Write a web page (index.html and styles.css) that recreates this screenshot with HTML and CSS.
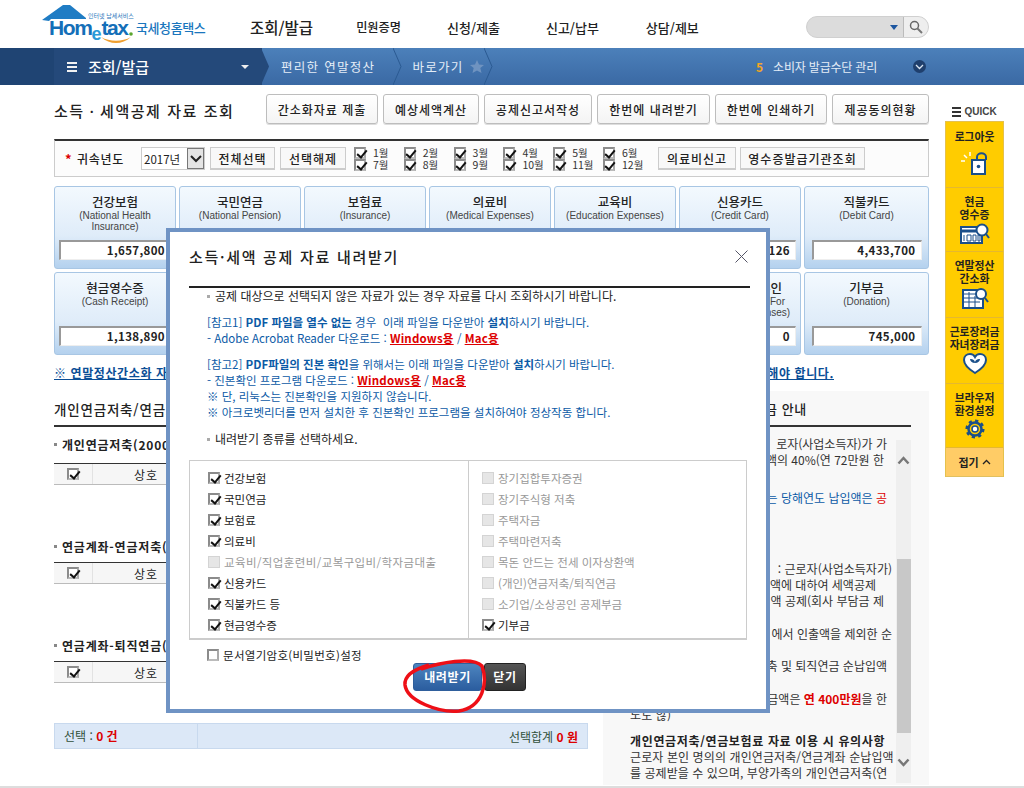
FILE: index.html
```html
<!DOCTYPE html>
<html lang="ko">
<head>
<meta charset="utf-8">
<title>국세청 홈택스</title>
<link rel="stylesheet" href="styles.css">
</head>
<body>
<div class="page">
  <header class="top">
    <div class="logo">
      <svg class="logo-art" width="100" height="46" viewBox="0 0 100 46"><path d="M0 20 21 5 28 5 44 18 44 19 9 19 7 21Z" fill="#1f7cc4"/><path d="M59 37C68 45 80 45 89 37 80 42 68 42 59 37Z" fill="#f0a030"/><circle cx="89" cy="34" r="1.800" fill="#5aa52d"/></svg>
      <span class="logo-small">인터넷 납세서비스</span>
      <span class="logo-word">Hom<span class="logo-e">e</span>tax</span>
      <span class="logo-kr">국세청홈택스</span>
    </div>
    <nav class="gnb">
      <a class="gnb-a gnb-main">조회/발급</a>
      <a class="gnb-a gnb-2">민원증명</a>
      <a class="gnb-a gnb-3">신청/제출</a>
      <a class="gnb-a gnb-4">신고/납부</a>
      <a class="gnb-a">상담/제보</a>
    </nav>
    <div class="search">
      <div class="search-field"><span class="caret-blue"></span></div>
      <div class="search-btn"><svg width="14" height="14" viewBox="0 0 14 14"><circle cx="5.500" cy="5.500" r="4" fill="none" stroke="#666" stroke-width="1.500"/><path d="M8.500 8.500 13 13" stroke="#777" stroke-width="2"/></svg></div>
    </div>
  </header>

  <div class="bar">
    <div class="bar-menu">
      <span class="burger"><i></i><i></i><i></i></span>
      <span class="bar-title">조회/발급</span>
      <span class="caret-white"></span>
      <svg class="chev-first" width="9" height="37" viewBox="0 0 9 37"><path d="M0 0 8 18.500 0 37Z" fill="#24497a"/></svg>
    </div>
    <span class="crumb crumb-1">편리한 연말정산</span>
    <svg class="chev" width="9" height="37" viewBox="0 0 9 37"><path d="M0 0 8 18.500 0 37" fill="none" stroke="#2b5a92"/></svg>
    <span class="crumb crumb-2">바로가기</span>
    <svg class="star" width="14" height="13" viewBox="0 0 14 13"><path d="M7 0 9 4.500 14 5 10.300 8 11.500 13 7 10.400 2.500 13 3.700 8 0 5 5 4.500Z" fill="#6f93c0"/></svg>
    <svg class="chev" width="9" height="37" viewBox="0 0 9 37"><path d="M0 0 8 18.500 0 37" fill="none" stroke="#2b5a92"/></svg>
    <div class="bar-right">
      <span class="num">5</span><span class="crumb crumb-r">소비자 발급수단 관리</span>
      <span class="round"><svg width="9" height="6" viewBox="0 0 9 6"><path d="M1 1 4.500 4.500 8 1" fill="none" stroke="#dbe6f2" stroke-width="1.300"/></svg></span>
    </div>
  </div>

  <div class="content">
    <main class="main">
      <div class="title-row">
        <h1 class="page-title">소득ㆍ세액공제 자료 조회</h1>
        <div class="tools">
          <button class="tool w112">간소화자료 제출</button>
          <button class="tool w96">예상세액계산</button>
          <button class="tool w108">공제신고서작성</button>
          <button class="tool w113">한번에 내려받기</button>
          <button class="tool w112">한번에 인쇄하기</button>
          <button class="tool w97">제공동의현황</button>
        </div>
      </div>

      <div class="filter">
        <span class="req">*</span><b class="filter-label">귀속년도</b>
        <div class="select"><span>2017년</span><span class="select-btn"><svg width="12" height="8" viewBox="0 0 12 8"><path d="M1 1 6 6 11 1" fill="none" stroke="#222" stroke-width="2"/></svg></span></div>
        <button class="mini w65">전체선택</button>
        <button class="mini w66">선택해제</button>
        <div class="months">
          <label class="month"><span class="cb on"></span>1월</label>
          <label class="month"><span class="cb on"></span>2월</label>
          <label class="month"><span class="cb on"></span>3월</label>
          <label class="month"><span class="cb on"></span>4월</label>
          <label class="month"><span class="cb on"></span>5월</label>
          <label class="month"><span class="cb on"></span>6월</label>
          <label class="month"><span class="cb on"></span>7월</label>
          <label class="month"><span class="cb on"></span>8월</label>
          <label class="month"><span class="cb on"></span>9월</label>
          <label class="month"><span class="cb on"></span>10월</label>
          <label class="month"><span class="cb on"></span>11월</label>
          <label class="month"><span class="cb on"></span>12월</label>
        </div>
        <button class="mini w78">의료비신고</button>
        <button class="mini w125">영수증발급기관조회</button>
      </div>

      <div class="cards">
        <div class="card"><b>건강보험</b><small>(National Health<br>Insurance)</small><div class="val">1,657,800</div></div>
        <div class="card"><b>국민연금</b><small>(National Pension)</small><div class="val"></div></div>
        <div class="card"><b>보험료</b><small>(Insurance)</small><div class="val"></div></div>
        <div class="card"><b>의료비</b><small>(Medical Expenses)</small><div class="val"></div></div>
        <div class="card"><b>교육비</b><small>(Education Expenses)</small><div class="val"></div></div>
        <div class="card"><b>신용카드</b><small>(Credit Card)</small><div class="val">126</div></div>
        <div class="card"><b>직불카드</b><small>(Debit Card)</small><div class="val wide">4,433,700</div></div>
        <div class="card"><b>현금영수증</b><small>(Cash Receipt)</small><div class="val">1,138,890</div></div>
        <div class="card"><div class="val"></div></div>
        <div class="card"><div class="val"></div></div>
        <div class="card"><div class="val"></div></div>
        <div class="card"><div class="val"></div></div>
        <div class="card"><b>주택차입금 본인</b><small>(Deduction Rent For<br>(Long Term Expenses)</small><div class="val">0</div></div>
        <div class="card"><b>기부금</b><small>(Donation)</small><div class="val wide">745,000</div></div>
      </div>

      <div class="notice"><a>※ 연말정산간소화 자료</a><a>해야 합니다.</a></div>

      <div class="lower">
        <section class="left">
          <h2 class="sec-title">개인연금저축/연금보험료</h2>
          <h3 class="sub first">개인연금저축(2000년 이전)</h3>
          <div class="thead"><span class="th-cb"><span class="cb on"></span></span><span class="th-name">상호</span></div>
          <h3 class="sub">연금계좌-연금저축(2001년)</h3>
          <div class="thead"><span class="th-cb"><span class="cb on"></span></span><span class="th-name">상호</span></div>
          <h3 class="sub">연금계좌-퇴직연금(확정)</h3>
          <div class="thead"><span class="th-cb"><span class="cb on"></span></span><span class="th-name">상호</span></div>
          <div class="sum">
            <div class="sum-a">선택 : <b>0 건</b></div>
            <div class="sum-b">선택합계 <b>0 원</b></div>
          </div>
        </section>

        <aside class="guide">
          <h2 class="guide-title">금 안내</h2>
          <div class="guide-body">
            <div class="guide-text">
              <p class="gl e9">로자(사업소득자)가 가</p>
              <p class="gl e12">액의 40%(연 72만원 한</p>
              <p class="gl e9 g22 blue">에는 당해연도 납입액은 <em>공</em></p>
              <p class="gl e4 g55">: 근로자(사업소득자가)</p>
              <p class="gl e20">액에 대하여 세액공제</p>
              <p class="gl e12">액 공제(회사 부담금 제</p>
              <p class="gl e4 g17">에서 인출액을 제외한 순</p>
              <p class="gl e9 g16">축 및 퇴직연금 순납입액</p>
              <p class="gl e9 g17">금액은 <em class="strong">연 400만원</em>을 한</p>
              <p class="gl out">노도 않)</p>
              <p class="gl head g10">개인연금저축/연금보험료 자료 이용 시 유의사항</p>
              <p class="gl out">근로자 본인 명의의 개인연금저축/연금계좌 순납입액</p>
              <p class="gl out tight">를 공제받을 수 있으며, 부양가족의 개인연금저축(연</p>
            </div>
            <div class="track">
              <svg class="arrow up" width="13" height="9" viewBox="0 0 13 9"><path d="M1.500 7.500 6.500 2 11.500 7.500" fill="none" stroke="#777" stroke-width="2.500"/></svg>
              <div class="thumb"></div>
              <svg class="arrow down" width="13" height="9" viewBox="0 0 13 9"><path d="M1.500 1.500 6.500 7 11.500 1.500" fill="none" stroke="#777" stroke-width="2.500"/></svg>
            </div>
          </div>
        </aside>
      </div>
    </main>

    <div class="quick">
      <div class="quick-title"><span class="burger dark"><i></i><i></i><i></i></span>QUICK</div>
      <div class="quick-box">
        <a class="q h66 one">로그아웃
          <svg width="30" height="24" viewBox="0 0 30 24"><path d="M12 8H25V22H12Z" fill="#fff" stroke="#1a4f8a" stroke-width="2"/><path d="M17 8V5C17 0 26 0 26 5V8" fill="none" stroke="#1a4f8a" stroke-width="2"/><circle cx="18.500" cy="14.500" r="1.800" fill="#1a4f8a"/><path d="M1 9H5M4 3 7 6M10 0V4" stroke="#fff" stroke-width="1.500"/></svg>
        </a>
        <a class="q h64">현금<br>영수증
          <svg width="30" height="22" viewBox="0 0 30 22"><path d="M1 4H22V20H1Z" fill="#fff" stroke="#1a4f8a" stroke-width="2"/><path d="M1 8H20" stroke="#1a4f8a" stroke-width="3"/><circle cx="22" cy="7" r="5.500" fill="#fff" stroke="#1a4f8a" stroke-width="2"/><path d="M26 11 29 15" stroke="#1a4f8a" stroke-width="2"/><path d="M4 12V18M7 12H11V18H7ZM13 12H16V18H13ZM18 12H20V18H18Z" fill="none" stroke="#1a4f8a"/></svg>
        </a>
        <a class="q h66">연말정산<br>간소화
          <svg width="30" height="22" viewBox="0 0 30 22"><path d="M3 3H23V21H3Z" fill="#fff" stroke="#1a4f8a" stroke-width="2"/><path d="M3 7H20M3 11H20M3 15H20M9 5V21M15 9V21" stroke="#1a4f8a"/><circle cx="21" cy="7" r="5" fill="#fff" stroke="#1a4f8a" stroke-width="2"/><path d="M25 11 28 15" stroke="#1a4f8a" stroke-width="2"/></svg>
        </a>
        <a class="q h66">근로장려금<br>자녀장려금
          <svg width="24" height="22" viewBox="0 0 24 22"><path d="M12 20C4 15 1 11 1 7 1 3 4 1 7 1 9 1 11 2 12 4 13 2 15 1 17 1 20 1 23 3 23 7 23 11 20 15 12 20Z" fill="#fff" stroke="#1a4f8a" stroke-width="2"/><path d="M12 14V9M12 10C9 10 7 8 7 6 10 6 12 7 12 10 12 7 14 6 17 6 17 8 15 10 12 10Z" fill="#1a4f8a"/></svg>
        </a>
        <a class="q h64">브라우저<br>환경설정
          <svg width="20" height="20" viewBox="0 0 20 20"><circle cx="10" cy="10" r="6.500" fill="none" stroke="#1a4f8a" stroke-width="2.500"/><circle cx="10" cy="10" r="7.800" fill="none" stroke="#1a4f8a" stroke-width="3.500" stroke-dasharray="3 3.100"/><circle cx="10" cy="10" r="3" fill="#fff" stroke="#1a4f8a" stroke-width="1.500"/></svg>
        </a>
        <a class="q-fold">접기<svg width="9" height="6" viewBox="0 0 9 6"><path d="M1 5 4.500 1.500 8 5" fill="none" stroke="#222" stroke-width="1.300"/></svg></a>
      </div>
    </div>
  </div>

  <div class="modal">
    <div class="modal-head">
      <h2 class="modal-title">소득·세액 공제 자료 내려받기</h2>
      <svg width="13" height="13" viewBox="0 0 13 13"><path d="M.5.500 12.500 12.500M12.500.500 .5 12.500" stroke="#556" fill="none"/></svg>
    </div>
    <p class="m-line bullet">공제 대상으로 선택되지 않은 자료가 있는 경우 자료를 다시 조회하시기 바랍니다.</p>
    <div class="m-note n1">
      <p>[참고1] <b>PDF 파일을 열수 없는</b> 경우&nbsp; 이래 파일을 다운받아 <b>설치</b>하시기 바랍니다.</p>
      <p>- Adobe Acrobat Reader 다운로드 : <a>Windows용</a> / <a>Mac용</a></p>
    </div>
    <div class="m-note n2">
      <p>[참고2] <b>PDF파일의 진본 확인</b>을 위해서는 이래 파일을 다운받아 <b>설치</b>하시기 바랍니다.</p>
      <p>- 진본확인 프로그램 다운로드 : <a>Windows용</a> / <a>Mac용</a></p>
      <p>※ 단, 리눅스는 진본확인을 지원하지 않습니다.</p>
      <p>※ 아크로벳리더를 먼저 설치한 후 진본확인 프로그램을 설치하여야 정상작동 합니다.</p>
    </div>
    <p class="m-line bullet m-choose">내려받기 종류를 선택하세요.</p>
    <div class="choices">
      <div class="col">
        <label class="ch"><span class="cb on"></span>건강보험</label>
        <label class="ch"><span class="cb on"></span>국민연금</label>
        <label class="ch"><span class="cb on"></span>보험료</label>
        <label class="ch"><span class="cb on"></span>의료비</label>
        <label class="ch off slash"><span class="cb dis"></span>교육비/직업훈련비/교복구입비/학자금대출</label>
        <label class="ch"><span class="cb on"></span>신용카드</label>
        <label class="ch"><span class="cb on"></span>직불카드 등</label>
        <label class="ch"><span class="cb on"></span>현금영수증</label>
      </div>
      <div class="col">
        <label class="ch off"><span class="cb dis"></span>장기집합투자증권</label>
        <label class="ch off"><span class="cb dis"></span>장기주식형 저축</label>
        <label class="ch off"><span class="cb dis"></span>주택자금</label>
        <label class="ch off"><span class="cb dis"></span>주택마련저축</label>
        <label class="ch off"><span class="cb dis"></span>목돈 안드는 전세 이자상환액</label>
        <label class="ch off"><span class="cb dis"></span>(개인)연금저축/퇴직연금</label>
        <label class="ch off"><span class="cb dis"></span>소기업/소상공인 공제부금</label>
        <label class="ch"><span class="cb on"></span>기부금</label>
      </div>
    </div>
    <label class="ch pw"><span class="cb"></span>문서열기암호(비밀번호)설정</label>
    <div class="m-btns">
      <button class="btn-blue">내려받기</button>
      <button class="btn-dark">닫기</button>
    </div>
    <svg class="scribble" width="90" height="60" viewBox="0 0 90 60"><path d="M20 12C38 6 72 -1 81 9 87 26 82 50 58 54 38 56 6 44 4 28 3 18 14 12 28 8" fill="none" stroke="#ee0f16" stroke-width="3.500"/></svg>
  </div>
</div>
</body>
</html>
```
FILE: styles.css
```css
*{box-sizing:border-box}
html,body{margin:0;padding:0;background:#fff}
body{font-family:"Noto Sans CJK KR","Liberation Sans",sans-serif;font-size:12px;color:#222}
h1,h2,h3,p{margin:0}
button{font-family:inherit;cursor:default}
.page{position:relative;width:1024px;height:788px;overflow:hidden;border-bottom:2px solid #ddd}

/* header */
.top{height:48px;display:flex;align-items:flex-start}
.logo{position:relative;width:208px;height:48px;margin-left:42px}
.logo-art{position:absolute;left:0;top:0}
.logo-small{position:absolute;left:46px;top:12px;font-size:6px;line-height:7px;color:#2b78bb;white-space:nowrap}
.logo-word{position:absolute;left:7px;top:16px;font:bold 21px/24px "Liberation Sans",sans-serif;letter-spacing:-1.400px;color:#146fb8;white-space:nowrap}
.logo-e{font-size:18px;color:#2b9ad8;position:relative;top:5px;letter-spacing:0}
.logo-kr{position:absolute;left:94px;top:20px;font-size:13px;line-height:16px;font-weight:500;color:#1a76bd;white-space:nowrap;letter-spacing:-.4px}
.gnb{display:flex;width:556px;height:48px;align-items:center;margin-top:3px}
.gnb-a{font-size:13px;font-weight:500;color:#222;white-space:nowrap}
.gnb-main{font-size:15.500px;margin-right:43px}
.gnb-2{font-size:12.200px;margin-right:46px}
.gnb-3{margin-right:46px}
.gnb-4{margin-right:47px}
.search{display:flex;width:123px;height:22px;margin-top:16px;border-radius:11px;overflow:hidden;background:#dcdcdc;border:1px solid #d0d0d0}
.search-field{flex:1;display:flex;align-items:center;justify-content:flex-end;padding-right:5px;border-right:1px solid #bbb}
.caret-blue{border:4px solid transparent;border-top:5px solid #1c56a0;border-bottom:0}
.search-btn{width:24px;background:#eee;display:flex;align-items:center;justify-content:center}

/* bar */
.bar{height:37px;display:flex;align-items:center;background:linear-gradient(#4c80ba,#3a69a4);color:#e8eff8}
.bar-menu{position:relative;width:262px;height:37px;background:#24497a;padding-left:67px;display:flex;align-items:center;box-shadow:inset 54px 0 0 #1f4473}
.burger{display:inline-flex;flex-direction:column;gap:2px;width:10px;margin-right:11px}
.burger i{display:block;height:2px;background:#f2f2f2}
.burger.dark{margin-right:3px;width:9px}
.burger.dark i{background:#333}
.bar-title{font-size:15px;color:#fff;font-weight:500}
.caret-white{border:4px solid transparent;border-top:4px solid #eee;border-bottom:0;margin-left:92px}
.chev-first{position:absolute;right:-8px;top:0}
.crumb{font-size:12.500px;letter-spacing:1.300px;color:#e4edf7;white-space:nowrap}
.crumb-1{margin-left:19px}
.bar .chev{margin-left:18px}
.crumb-2{margin-left:10px}
.crumb-r{font-size:12px;letter-spacing:-.2px}
.star{margin-left:6px}
.bar .star + .chev{margin-left:0}
.bar-right{display:flex;align-items:center;margin-left:auto;padding-right:98px}
.num{color:#f5a623;font-weight:bold;margin-right:10px}
.round{width:13px;height:13px;border-radius:50%;background:#1f3f6d;display:flex;align-items:center;justify-content:center;margin-left:36px}

/* main */
.content{display:flex;padding-left:54px;gap:16px;align-items:flex-start}
.main{width:875px;flex:none}
.title-row{display:flex;justify-content:space-between;align-items:flex-start;padding-top:9px;height:54px}
.page-title{font-size:15px;font-weight:500;color:#222;letter-spacing:1.550px;margin-top:7px;line-height:20px;white-space:nowrap}
.tools{display:flex;gap:5px}
.tool{height:30px;padding:0;background:linear-gradient(#fff,#f4f4f4);border:1px solid #bdbdbd;border-radius:3px;font-size:12px;font-weight:500;color:#222;letter-spacing:1px;white-space:nowrap;box-shadow:0 1px 0 #ddd}
.w112{width:112px}.w96{width:96px}.w108{width:108px}.w113{width:113px}.w97{width:97px}
.filter{display:flex;align-items:center;height:38px;padding-left:10px;background:#fcfcfc;border:1px solid #ccc;border-top:2px solid #333}
.req{color:#d00;font-weight:bold;width:12px;font-size:13px}
.filter-label{width:64px;font-weight:500;letter-spacing:.7px}
.select{display:flex;width:64px;height:23px;align-items:center;justify-content:space-between;background:#fff;border:1px solid #ccc;padding-left:2px;font-size:11.500px}
.select-btn{width:17px;height:21px;background:#e4e4e4;border:1px solid #777;display:flex;align-items:center;justify-content:center}
.mini{height:23px;padding:0;background:#f8f8f8;border:1px solid #ccc;border-bottom:2px solid #ccc;font-size:12px;font-weight:500;letter-spacing:1px;color:#222;white-space:nowrap}
.w65{width:65px;margin-left:5px}.w66{width:66px;margin-left:5px}.w78{width:78px}.w125{width:125px;margin-left:4px}
.months{display:grid;grid-template-columns:repeat(6,49.800px);grid-auto-rows:12px;margin-left:8px;width:304px}
.month{display:flex;align-items:center;font-size:10.500px;line-height:12px;height:12px;color:#333;white-space:nowrap}
.month .cb{margin-right:7px}
.cb{position:relative;display:inline-block;flex:none;width:12px;height:12px;background:#fff;border:2px solid #8b8b8b;border-right-color:#aaa;border-bottom-color:#bbb}
.cb.on::after{content:"";position:absolute;left:2.500px;top:-1px;width:4px;height:8px;border:solid #111;border-width:0 2px 2px 0;transform:rotate(40deg)}
.cb.dis{background:#e6e6e6;border:1px solid #d4d4d4}
.cards{display:grid;grid-template-columns:repeat(6,122px) 1fr;grid-auto-rows:83px;gap:3px;margin-top:9px}
.card{display:flex;flex-direction:column;align-items:center;padding:7px 4px 8px;background:linear-gradient(#f3f9fe,#dfecf9 60%,#b4d1ee);border:1px solid #a8c6e4;border-radius:3px;text-align:center;overflow:hidden}
.card b{font-size:12.500px;line-height:16px;font-weight:500;color:#222;white-space:nowrap}
.card small{font:10px/11px "Liberation Sans",sans-serif;color:#444;white-space:nowrap}
.val{margin-top:auto;flex:none;width:100%;height:20px;background:#fff;border:1px solid #eee;border-top:2px solid #999;border-left:2px solid #999;text-align:right;font-size:11.500px;font-weight:bold;letter-spacing:.35px;line-height:17px;padding-right:5px;color:#222}
.val.wide{width:110px}
.notice{display:flex;justify-content:space-between;width:780px;height:36px;padding-top:9px;font-weight:bold;font-size:12px;color:#0b4e96;letter-spacing:.6px;white-space:nowrap}
.notice a{text-decoration:underline}
.lower{display:flex;gap:15px}
.left{width:534px;flex:none}
.sec-title{height:36px;font-size:13.500px;line-height:36px;font-weight:500;letter-spacing:.8px;color:#222;border-bottom:2px solid #333}
.sub{position:relative;padding-left:8px;height:15px;margin:54px 0 8px;font-size:12px;line-height:15px;font-weight:bold;letter-spacing:.8px;color:#222;white-space:nowrap}
.sub.first{margin:10px 0 11px}
.sub::before{content:"";position:absolute;left:0;top:6px;width:3px;height:3px;background:#888}
.thead{display:flex;align-items:center;height:22px;background:#f6f6f6;border-top:1px solid #333;border-bottom:1px solid #bbb}
.th-cb{width:39px;height:100%;display:flex;align-items:center;justify-content:center;border-right:1px solid #e2e2e2}
.th-name{margin-left:41px;font-size:12px;letter-spacing:1px}
.sum{display:flex;height:26px;margin-top:40px;background:#dce8f7;border:1px solid #c8d9ee;align-items:center;color:#30503a}
.sum-a{width:143px;padding-left:9px;line-height:24px;border-right:1px solid #c8d9ee}
.sum-b{flex:1;text-align:right;padding-right:9px}
.sum b{color:#d00;font-weight:bold}
.guide{width:326px;height:394px;background:#f8f8f8;padding:0 18px 0 15px;flex:none}
.guide-title{height:36px;border-bottom:2px solid #333;font-size:13px;line-height:36px;font-weight:500;padding-left:147px;letter-spacing:.6px}
.guide-body{display:flex;justify-content:space-between;margin-top:13px;height:343px}
.guide-text{width:278px;flex:none;margin-top:-4px}
.gl{font-size:12px;line-height:16px;white-space:nowrap;color:#333;text-align:right}
.gl em{font-style:normal;color:#d00}
.gl em.strong{font-weight:bold}
.e4{padding-right:4px}.e9{padding-right:9px}.e12{padding-right:12px}.e20{padding-right:20px}
.out{padding-left:12px;text-align:left;letter-spacing:.1px}
.out.tight{letter-spacing:.05px}
.blue{color:#0b5aa6}
.head{padding-left:12px;text-align:left;font-weight:bold;letter-spacing:.65px;color:#222}
.g22{margin-top:22px}.g55{margin-top:55px}.g17{margin-top:17px}.g16{margin-top:16px}.g10{margin-top:10px}
.track{width:15px;height:343px;background:#efefef;display:flex;flex-direction:column;align-items:center}
.arrow{flex:none}
.arrow.up{margin-top:16px}
.thumb{width:14px;height:174px;background:#c8c8c8;margin-top:94px}
.arrow.down{margin-top:25px}

/* quick */
.quick{width:59px;flex:none;padding-top:18px}
.quick-title{display:flex;align-items:center;justify-content:center;height:18px;font:bold 10px/18px "Liberation Sans",sans-serif;color:#444}
.quick-box{background:#fc0;border:1px solid #e5c14d;border-bottom:0}
.q{display:flex;flex-direction:column;align-items:center;padding-top:7px;font-size:10.800px;font-weight:bold;line-height:13px;color:#222;text-align:center;border-bottom:1px solid #e5b830;white-space:nowrap}
.q.one{padding-top:8px}
.q svg{margin-top:2px}
.q.one svg{margin-top:9px}
.h66{height:66px}.h64{height:64px}
.q-fold{display:flex;align-items:center;justify-content:center;gap:3px;height:29px;background:#fc6;font-size:11px;font-weight:bold;color:#222;border-bottom:1px solid #e0c060}

/* modal */
.modal{position:absolute;left:166px;top:228px;width:604px;height:485px;background:#fff;border:4px solid #6f93c4;padding:0 19px}
.modal-head{display:flex;justify-content:space-between;align-items:center;height:56px;border-bottom:2px solid #222;padding-right:2px;padding-bottom:5px;margin-right:-3px}
.modal-title{font-size:15px;font-weight:500;letter-spacing:1.700px;color:#222;white-space:nowrap}
.m-line{font-size:12px;line-height:16px;color:#222;white-space:nowrap}
.bullet{position:relative;padding-left:26px}
.bullet::before{content:"";position:absolute;left:18px;top:7px;width:3px;height:3px;background:#aaa}
.m-note{padding-left:18px;color:#0b5aa6;font-size:11.500px;line-height:16.300px;white-space:nowrap}
.n1{margin-top:10px}
.n2{margin-top:9px}
.m-note b{font-weight:bold}
.m-note a{color:#d00;font-weight:bold;text-decoration:underline;letter-spacing:.2px}
.m-choose{margin-top:10px}
.choices{display:flex;width:558px;height:180px;margin-top:13px;border:1px solid #ccc;border-bottom:2px solid #ccc}
.col{flex:none;padding:7px 0 0 18px;display:flex;flex-direction:column}
.col:first-child{width:279px;border-right:1px solid #ccc}
.col:last-child{padding-left:13px}
.ch{display:flex;align-items:center;height:21px;font-size:11.500px;color:#222;white-space:nowrap}
.ch .cb{margin-right:4px}
.ch.off{color:#999}
.ch.slash{letter-spacing:.4px}
.pw{margin:5px 0 0 18px;height:20px;letter-spacing:.3px}
.m-btns{display:flex;justify-content:center;gap:2px;margin-top:-2px;padding-left:3px}
.btn-blue,.btn-dark{height:28px;padding:0;font-size:12px;font-weight:bold;color:#fff;border-radius:3px;letter-spacing:.6px}
.btn-blue{width:69px;background:linear-gradient(#4d85bf,#2b5d9f);border:1px solid #2f5f9c}
.btn-dark{width:42px;background:linear-gradient(#555,#333);border:1px solid #222}
.scribble{position:absolute;left:231px;top:425px}
```
